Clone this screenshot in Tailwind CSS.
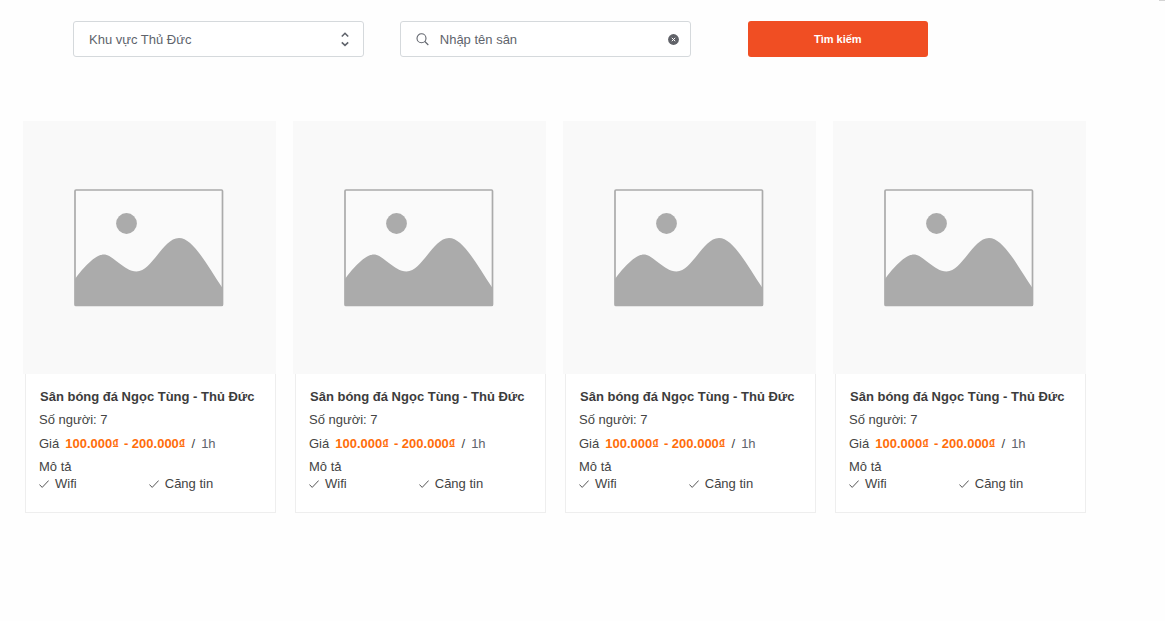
<!DOCTYPE html>
<html lang="vi">
<head>
<meta charset="utf-8">
<meta name="viewport" content="width=device-width, initial-scale=1">
<title>Tìm kiếm sân bóng</title>
<script src="https://cdn.jsdelivr.net/npm/@tailwindcss/browser@4"></script>
</head>
<body class="bg-[#fefefe] font-['Liberation_Sans',Arial,sans-serif] text-[13px] text-[#444]">
<div class="absolute top-0 right-0 h-px w-[6px] bg-[#d4d4d4]"></div>
<form class="flex pt-[21px] pr-[237px] pl-[73px]" onsubmit="return false">
  <div class="relative mr-9 flex-[29]">
    <select aria-label="Khu vực" class="block h-9 w-full appearance-none rounded-[3px] border border-[#d5d9dc] bg-white px-[15px] pt-[2px] text-[13px] text-[#60646c]">
      <option>Khu vực Thủ Đức</option>
    </select>
    <svg class="pointer-events-none absolute top-[10px] right-[14px] h-4 w-[10px]" viewBox="0 0 10 16" fill="none" stroke="#60646c" stroke-width="1.600"><path d="M1.800 5.500 5 2.300l3.200 3.200M1.800 11.300 5 14.300l3.200-3"/></svg>
  </div>
  <div class="relative mr-[57px] flex-[29]">
    <input type="text" aria-label="Tên sân" placeholder="Nhập tên sân" class="block h-9 w-full rounded-[3px] border border-[#d5d9dc] bg-white pr-9 pl-[39px] text-[13px] placeholder:text-[#60646c]">
    <svg class="pointer-events-none absolute top-3 left-4 h-[13px] w-[13px]" viewBox="0 0 13 13" fill="none" stroke="#60646c" stroke-width="1.100"><circle cx="5.500" cy="5.200" r="4.500"/><path d="m8.800 8.500 3.500 3.500"/></svg>
    <button type="button" aria-label="Xóa" class="absolute top-[13px] right-3 h-[11px] w-[11px]"><svg class="block h-[11px] w-[11px]" viewBox="0 0 11 11"><circle cx="5.500" cy="5.500" r="5.400" fill="#606268"/><path d="m3.800 3.800 3.400 3.400m0-3.400L3.800 7.200" stroke="#fff" stroke-width="1"/></svg></button>
  </div>
  <button type="submit" class="h-9 flex-[18] rounded-[3px] bg-[#f04e23] text-[11px] font-bold text-white">Tìm kiếm</button>
</form>

<main id="fields" class="mt-16 grid grid-cols-4 gap-[17px] pr-[79px] pl-[23px]"></main>

<template id="card">
  <article>
    <svg class="block aspect-square w-full bg-[#f9f9f9]" viewBox="0 0 253 253" role="img" aria-label="Ảnh sân bóng">
      <rect x="52" y="69" width="147.500" height="115.500" rx="1" fill="#fafafa" stroke="#ababab" stroke-width="1.700"/>
      <circle cx="103.500" cy="102.500" r="10.400" fill="#ababab"/>
      <path fill="#ababab" d="M52 158C60 147 72 133.500 81 133.500C90 133.500 101 150.500 113.500 150.500C129 150.500 140 117 156 117C170 117 184 144 199.500 167V184.500H52Z"/>
    </svg>
    <div class="ml-[2px] border border-t-0 border-[#eee] bg-white pt-[15px] pr-3 pb-5 pl-[13px]">
      <h2 class="ml-px text-[13px] leading-4 font-bold whitespace-nowrap text-[#3c3c3c]">Sân bóng đá Ngọc Tùng - Thủ Đức</h2>
      <p class="mt-[7px] leading-4">Số người: 7</p>
      <p class="mt-2 flex gap-[6px] leading-4 whitespace-nowrap"><span>Giá</span><span class="flex gap-[5px] font-bold text-[#ff6d0a]"><span>100.000₫</span><span>- 200.000₫</span></span><span>/</span><span class="text-[#60646c]">1h</span></p>
      <p class="mt-[7px] leading-4">Mô tả</p>
      <ul class="mt-px flex leading-4">
        <li class="flex w-[49%] items-center gap-[6px]"><svg class="h-2 w-[10px]" viewBox="0 0 10 8" fill="none" stroke="#555"><path d="m.4 4.500 2.800 2.900L9.700.5"/></svg>Wifi</li>
        <li class="flex items-center gap-[6px]"><svg class="h-2 w-[10px]" viewBox="0 0 10 8" fill="none" stroke="#555"><path d="m.4 4.500 2.800 2.900L9.700.5"/></svg>Căng tin</li>
      </ul>
    </div>
  </article>
</template>
<script>
  const list = document.getElementById('fields');
  const card = document.getElementById('card');
  for (let i = 0; i < 4; i++) list.append(card.content.cloneNode(true));
</script>
</body>
</html>
